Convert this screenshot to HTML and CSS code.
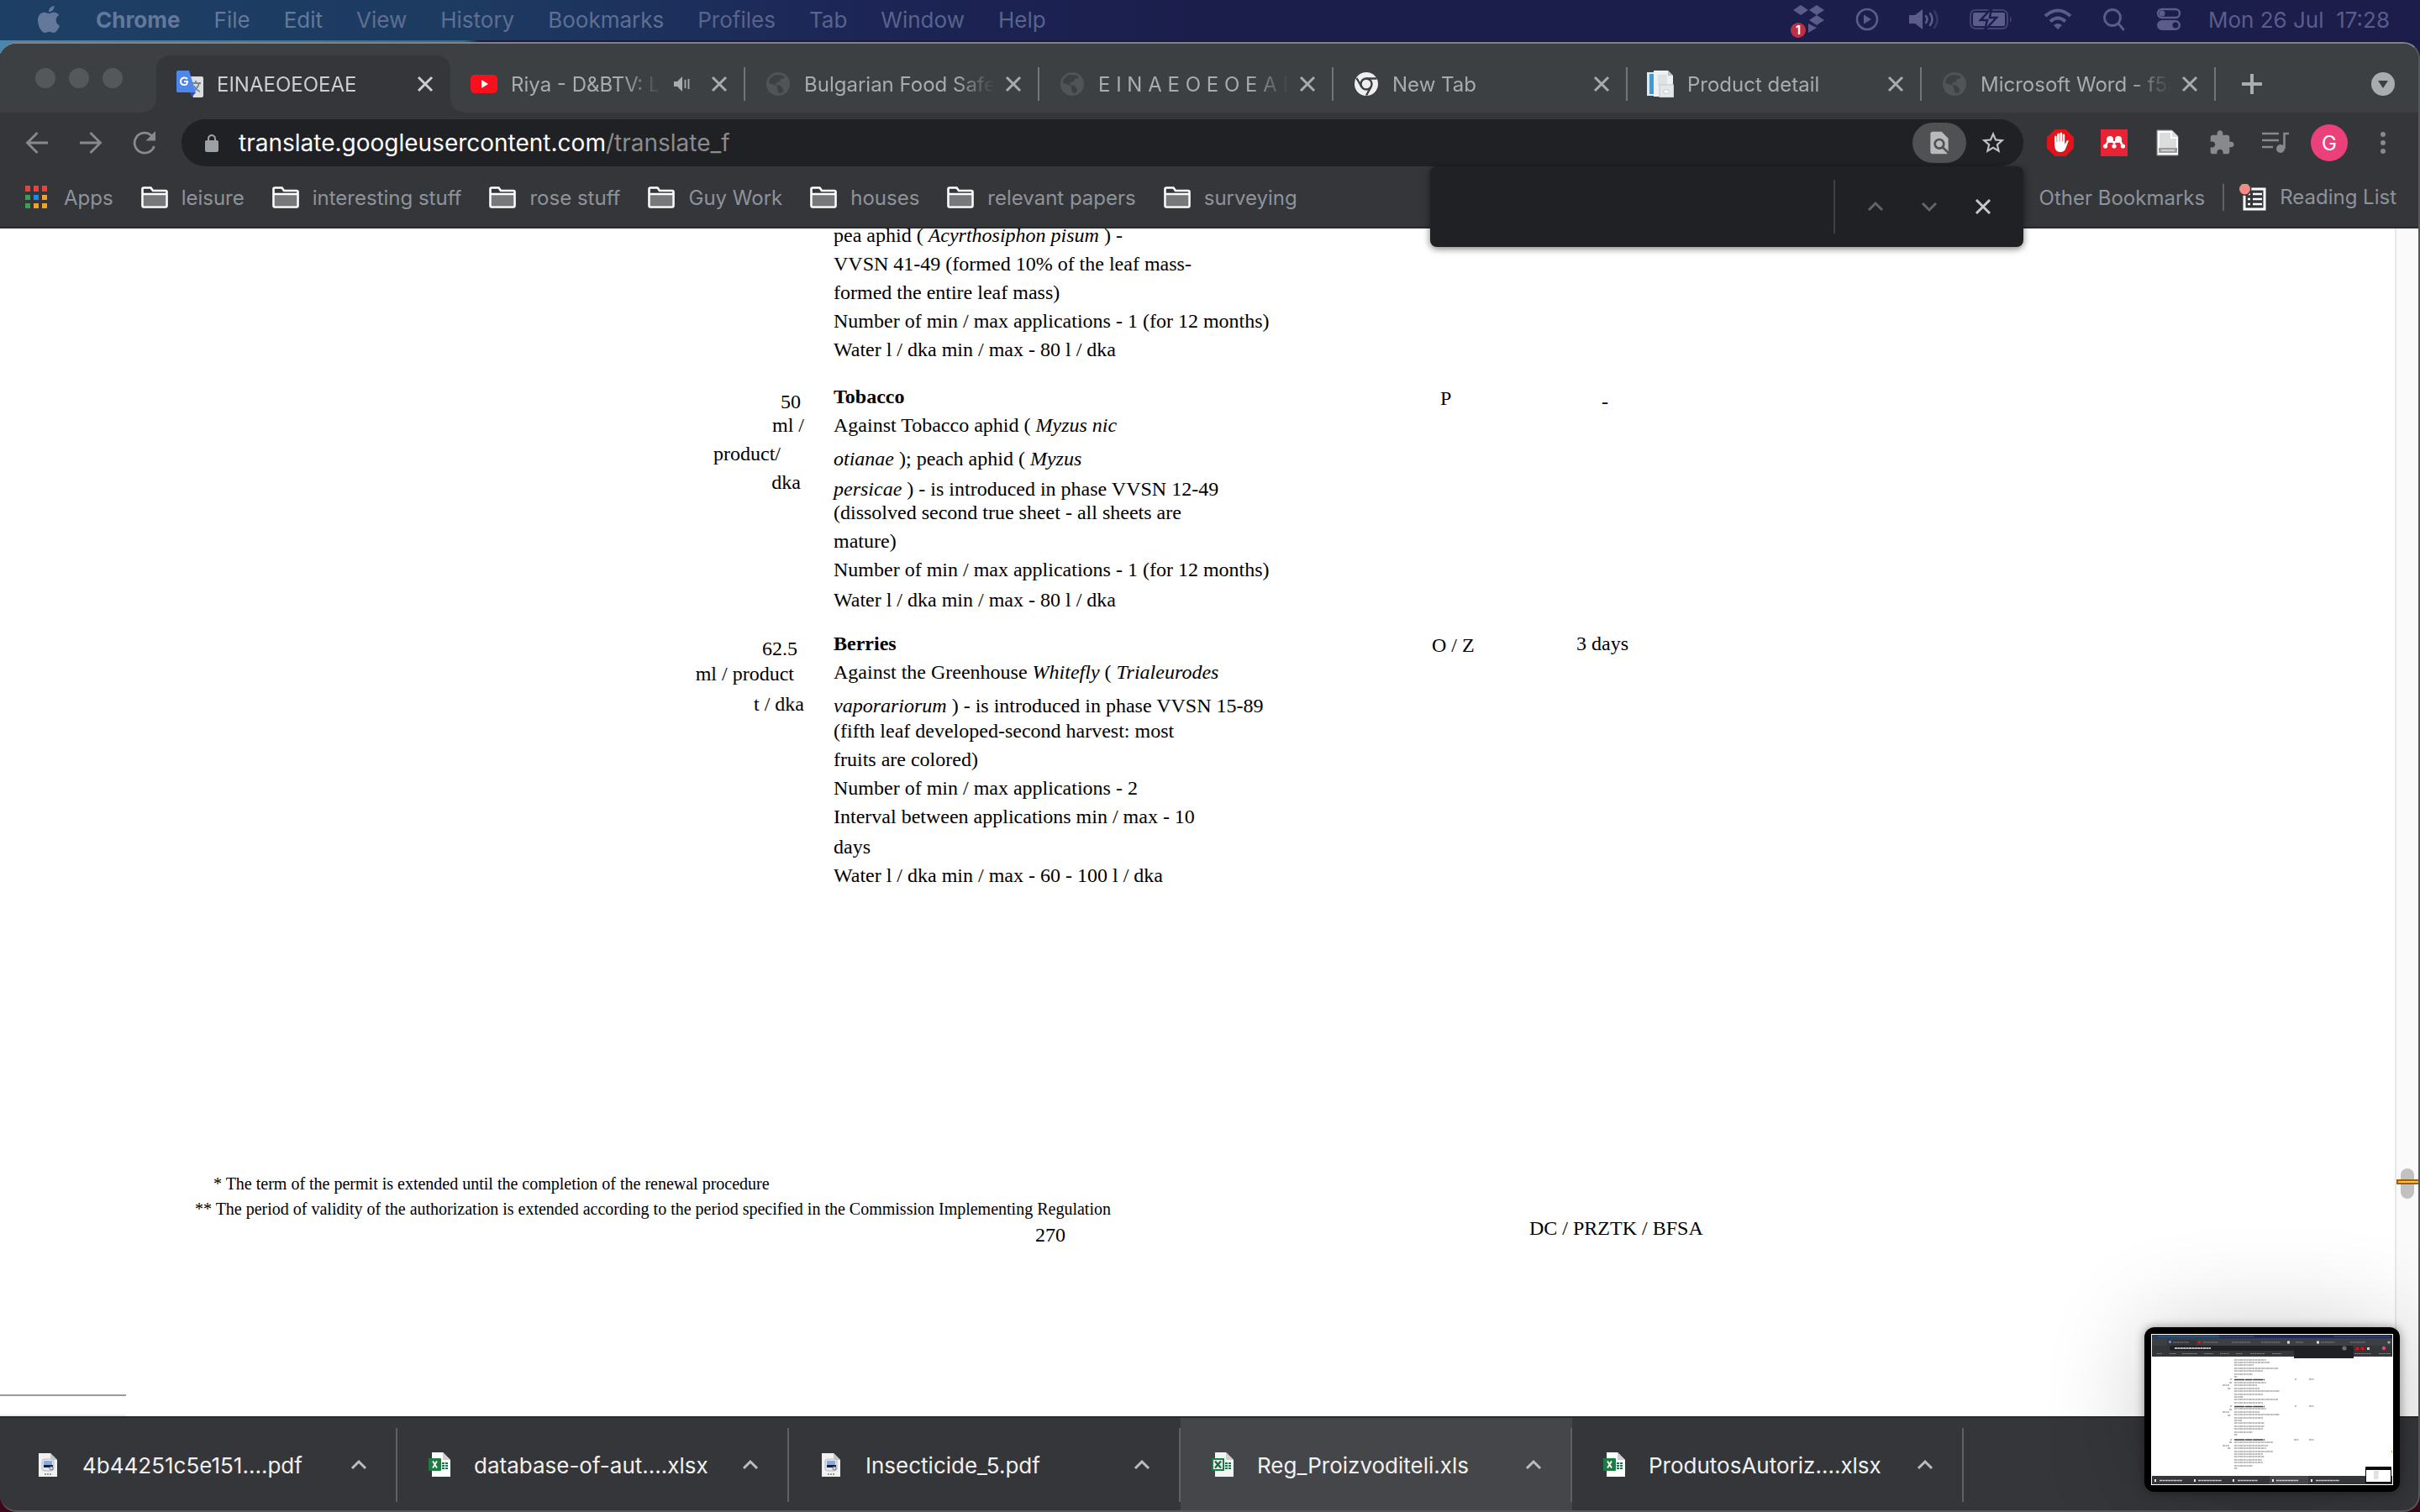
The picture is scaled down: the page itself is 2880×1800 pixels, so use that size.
FILE: index.html
```html
<!DOCTYPE html>
<html lang="en">
<head>
<meta charset="utf-8">
<title>EINAEOEOEAE</title>
<link rel="stylesheet" href="styles.css">
</head>
<body>
<svg class="sprite" aria-hidden="true">
  <symbol id="close" viewBox="0 0 20 20"><path d="M2 2l16 16M18 2L2 18" fill="none" stroke="currentColor" stroke-width="3"/></symbol>
  <symbol id="up" viewBox="0 0 20 20"><path d="M2 14l8-8 8 8" fill="none" stroke="currentColor" stroke-width="3"/></symbol>
  <symbol id="down" viewBox="0 0 20 20"><path d="M2 6l8 8 8-8" fill="none" stroke="currentColor" stroke-width="3"/></symbol>
  <symbol id="globe" viewBox="0 0 28 28"><circle cx="14" cy="14" r="14" fill="#505457"/><path d="M12 3c-5 1-9 5-9 10l7 2 3 2v3l2 5c2 0 4-1 5-2v-3l-3-4-6-1 1-3 4-1 1-3 5-1-2-3z" fill="#3c4043"/></symbol>
  <symbol id="folder" viewBox="0 0 32 26"><path d="M2 23V2h10l3 4h15v17z" fill="#35363a"/><path d="M3 10h26v13H3z" fill="#77787a"/><path d="M1.500 22.500V3q0-1.500 1.500-1.500h8.500L14 5h15q1.500 0 1.500 1.500v16q0 2-1.500 2H3q-1.500 0-1.500-2zM2 9h28" fill="none" stroke="#fff" stroke-width="2.600"/></symbol>
  <symbol id="pdf" viewBox="0 0 24 30"><path d="M1 1h14l8 8v20H1z" fill="#f1f1f1"/><path d="M15 1v8h8z" fill="#c4c4c4"/><rect x="5" y="8" width="14" height="14" rx="3" fill="#e3e6ea" stroke="#b5b9be"/><path d="M7 10h10v6H7z" fill="#86a9e6"/><path d="M7 15h11v3H7z" fill="#14213b"/><circle cx="16" cy="19" r="2" fill="#ddd" stroke="#777"/><path d="M8 26h8" stroke="#999" stroke-width="2" stroke-dasharray="2 1"/></symbol>
  <symbol id="excel" viewBox="0 0 28 30"><path d="M5 0h13l9 9v20H5z" fill="#fff"/><path d="M18 0l9 9h-9z" fill="#cfcfcf"/><path d="M17 12h3v2h-3zm4 0h3v2h-3zm-4 3h3v2h-3zm4 0h3v2h-3zm-4 3h3v2h-3zm4 0h3v2h-3z" fill="#21704a"/><rect x="1" y="7" width="15" height="15" rx="1" fill="#1d7c42"/><path d="M6 10.500l5 8M11 10.500l-5 8" stroke="#fff" stroke-width="1.800"/></symbol>
  <symbol id="excel-old" viewBox="0 0 28 30"><path d="M5 0h13l9 9v20H5z" fill="#f4f4f4"/><path d="M18 0l9 9h-9z" fill="#cfcfcf"/><path d="M17 12h3v2h-3zm4 0h3v2h-3zm-4 3h3v2h-3zm4 0h3v2h-3zm-4 3h3v2h-3zm4 0h3v2h-3z" fill="#21704a"/><rect x="2" y="8" width="13" height="13" fill="#e8f1ec" stroke="#1d7c42" stroke-width="2"/><path d="M5 10.500l7 8M12 10.500l-7 8" stroke="#1d6a3c" stroke-width="2.400"/></symbol>
</svg>

<header class="menubar">
  <nav class="menus" aria-label="Menu bar">
    <button class="menu apple" aria-label="Apple menu"><svg viewBox="0 0 24 24" fill="currentColor"><path d="M12.152 6.896c-.948 0-2.415-1.078-3.960-1.040-2.040.027-3.910 1.183-4.961 3.014-2.117 3.675-.546 9.103 1.519 12.090 1.013 1.454 2.208 3.090 3.792 3.039 1.520-.065 2.090-.987 3.935-.987 1.831 0 2.350.987 3.960.948 1.637-.026 2.676-1.480 3.676-2.948 1.156-1.688 1.636-3.325 1.662-3.415-.039-.013-3.182-1.221-3.220-4.857-.026-3.040 2.480-4.494 2.597-4.559-1.429-2.090-3.623-2.324-4.390-2.376-2-.156-3.675 1.090-4.610 1.090zM15.530 3.830c.843-1.012 1.400-2.427 1.245-3.830-1.207.052-2.662.805-3.532 1.818-.780.896-1.454 2.338-1.273 3.714 1.338.104 2.715-.688 3.559-1.701"/></svg></button>
    <button class="menu app">Chrome</button>
    <button class="menu">File</button>
    <button class="menu">Edit</button>
    <button class="menu">View</button>
    <button class="menu">History</button>
    <button class="menu">Bookmarks</button>
    <button class="menu">Profiles</button>
    <button class="menu">Tab</button>
    <button class="menu">Window</button>
    <button class="menu">Help</button>
  </nav>
  <div class="status">
    <span class="dropbox"><svg width="40" height="36" viewBox="0 0 40 36" fill="currentColor"><path d="M11 1l9 6-9 6-9-6zM30 1l9 6-9 6-9-6zM30 13l9 6-9 6-9-6zM20 23l10 5-10 6z"/></svg><b class="badge">1</b></span>
    <svg width="28" height="28" viewBox="0 0 28 28" fill="none" stroke="currentColor" stroke-width="2.600"><circle cx="14" cy="14" r="12"/><path d="M10 8.500v11l9-5.500z" fill="currentColor" stroke="none"/></svg>
    <svg width="36" height="26" viewBox="0 0 36 26" fill="none" stroke="currentColor" stroke-width="2.600" stroke-linecap="round"><path d="M0 8h7l9-7v24l-9-7H0z" fill="currentColor" stroke="none"/><path d="M20 9q3 4 0 8M25 6q5 7 0 14"/><path d="M30 3q7 10 0 20" opacity=".4"/></svg>
    <svg width="52" height="26" viewBox="0 0 52 26"><rect x="1" y="2" width="44" height="22" rx="6" fill="none" stroke="currentColor" stroke-width="2" opacity=".6"/><rect x="4" y="5" width="38" height="16" rx="2" fill="currentColor"/><path d="M26 0L13 14h8l-3 12 14-15h-8z" fill="currentColor" stroke="#1c1d4b" stroke-width="2.500"/><path d="M48 9q4 4 0 8z" fill="currentColor" opacity=".6"/></svg>
    <svg width="34" height="26" viewBox="0 0 34 26" fill="none" stroke="currentColor" stroke-width="4"><path d="M2 9q15-13 30 0M8 15.500q9-8 18 0"/><path d="M12 20q5-4 10 0l-5 5z" fill="currentColor" stroke="none"/></svg>
    <svg width="28" height="28" viewBox="0 0 28 28" fill="none" stroke="currentColor" stroke-width="2.800" stroke-linecap="round"><circle cx="12" cy="12" r="9.500"/><path d="M19 19l6 7"/></svg>
    <svg width="30" height="28" viewBox="0 0 30 28"><rect x="2" y="2" width="26" height="10" rx="5" fill="none" stroke="currentColor" stroke-width="2.400"/><circle cx="7" cy="7" r="3.500" fill="currentColor"/><rect x="1" y="15" width="28" height="12" rx="6" fill="currentColor"/><circle cx="23" cy="21" r="3.500" fill="#1c1d4b"/></svg>
    <time class="clock">Mon 26 Jul&nbsp; 17:28</time>
  </div>
</header>

<main class="window">
  <div class="tabstrip">
    <div class="lights"><button aria-label="Close window"></button><button aria-label="Minimise window"></button><button aria-label="Zoom window"></button></div>
    <div class="tabs">
      <div class="tab active">
        <svg class="favicon" viewBox="0 0 32 32"><path d="M11 7h19q2 0 2 2v21q0 2-2 2H20z" fill="#dedede"/><path d="M18 15h11M23 12v3M27 15q-2 7-8 10M21 18q2 5 7 7" stroke="#6f8794" stroke-width="1.800" fill="none"/><path d="M2 0h13l8 26H2q-2 0-2-2V2q0-2 2-2z" fill="#4f86ec"/><path d="M16 26h7l-5 6z" fill="#3949ab"/><path d="M13 10q-2-2-4.500-1.500Q5 9.500 5 13t4 4 4-4H9" fill="none" stroke="#fff" stroke-width="2"/></svg>
        <span class="title">EINAEOEOEAE</span>
        <button class="icon close" aria-label="Close tab"><svg><use href="#close"/></svg></button>
      </div>
      <div class="tab">
        <svg class="favicon" viewBox="0 0 32 32"><rect y="5" width="32" height="22" rx="5" fill="#f9101c"/><path d="M13 11v10l8-5z" fill="#fff"/></svg>
        <span class="title">Riya - D&amp;BTV: Live</span>
        <svg class="audio" viewBox="0 0 20 18"><path d="M0 6h4l6-6v18l-6-6H0z" fill="currentColor"/><path d="M13.500 4v10M17.500 3v12" stroke="currentColor" stroke-width="1.800"/></svg>
        <button class="icon close" aria-label="Close tab"><svg><use href="#close"/></svg></button>
      </div>
      <div class="tab">
        <svg class="favicon globe"><use href="#globe"/></svg>
        <span class="title">Bulgarian Food Safety</span>
        <button class="icon close" aria-label="Close tab"><svg><use href="#close"/></svg></button>
      </div>
      <div class="tab">
        <svg class="favicon globe"><use href="#globe"/></svg>
        <span class="title">E I N A E O E O E A E</span>
        <button class="icon close" aria-label="Close tab"><svg><use href="#close"/></svg></button>
      </div>
      <div class="tab">
        <svg class="favicon globe" viewBox="0 0 28 28"><circle cx="14" cy="14" r="14" fill="#eee"/><circle cx="14" cy="14" r="6.500" fill="#eee" stroke="#3c4043" stroke-width="2.400"/><path d="M14 7.500h12.500M8.500 17.500L2.500 7M19.600 17.500L14 27.500" stroke="#3c4043" stroke-width="2.400"/></svg>
        <span class="title">New Tab</span>
        <button class="icon close" aria-label="Close tab"><svg><use href="#close"/></svg></button>
      </div>
      <div class="tab">
        <svg class="favicon" viewBox="0 0 32 32"><path d="M0 2h20v28H0z" fill="#d7ecf8"/><path d="M3 4h5v24H3z" fill="#3f9ad6"/><path d="M8 0h17l6 6v25H8z" fill="#eef1f3"/><path d="M13 5h11v13H13z" fill="#dde2e6"/><path d="M25 0v6h6z" fill="#b9c0c5"/><path d="M15 17h17v15H15z" fill="#e4e6e8" stroke="#c2c7ca"/><path d="M20 23h6v4h-6z" fill="#fff" stroke="#ccc"/></svg>
        <span class="title">Product detail</span>
        <button class="icon close" aria-label="Close tab"><svg><use href="#close"/></svg></button>
      </div>
      <div class="tab">
        <svg class="favicon globe"><use href="#globe"/></svg>
        <span class="title">Microsoft Word - f5a</span>
        <button class="icon close" aria-label="Close tab"><svg><use href="#close"/></svg></button>
      </div>
      <button class="icon newtab" aria-label="New tab"><svg viewBox="0 0 24 24"><path d="M12 0v24M0 12h24" stroke="currentColor" stroke-width="4"/></svg></button>
    </div>
    <button class="icon tabsearch" aria-label="Search tabs"><svg viewBox="0 0 28 28"><circle cx="14" cy="14" r="14" fill="#a9acae"/><path d="M8 10h12l-6 9z" fill="#3c4043"/></svg></button>
  </div>

  <div class="toolbar">
    <div class="navs">
      <button class="icon" aria-label="Back"><svg viewBox="0 0 28 28" fill="none" stroke="currentColor" stroke-width="2.800"><path d="M27 14H3M14.500 2L2.500 14l12 12"/></svg></button>
      <button class="icon" aria-label="Forward"><svg viewBox="0 0 28 28" fill="none" stroke="currentColor" stroke-width="2.800"><path d="M1 14h24M13.500 2l12 12-12 12"/></svg></button>
      <button class="icon" aria-label="Reload"><svg viewBox="0 0 28 28"><path d="M22.500 5.500A12 12 0 1 0 25.500 18" fill="none" stroke="currentColor" stroke-width="2.800"/><path d="M27 0v11.500H15.500z" fill="currentColor"/></svg></button>
    </div>
    <div class="omnibox">
      <svg class="lock" viewBox="4 1 16 21" fill="currentColor"><path d="M18 8h-1V6c0-2.760-2.240-5-5-5S7 3.240 7 6v2H6c-1.100 0-2 .9-2 2v10c0 1.100.9 2 2 2h12c1.100 0 2-.9 2-2V10c0-1.100-.9-2-2-2zM9 6c0-1.660 1.340-3 3-3s3 1.340 3 3v2H9V6z"/></svg>
      <a class="url" href="#page">translate.googleusercontent.com<span>/translate_f</span></a>
      <button class="icon findpill" aria-label="Find in page"><svg viewBox="0 0 24 24" fill="currentColor"><path d="M20 19.590V8l-6-6H6c-1.100 0-1.990.9-1.990 2L4 20c0 1.100.890 2 1.990 2H18c.450 0 .850-.150 1.190-.400l-4.430-4.430c-.8.520-1.740.830-2.760.830-2.760 0-5-2.240-5-5s2.240-5 5-5 5 2.240 5 5c0 1.020-.310 1.960-.830 2.750L20 19.590zM9 13c0 1.660 1.340 3 3 3s3-1.340 3-3-1.340-3-3-3-3 1.340-3 3z"/></svg></button>
      <button class="icon star" aria-label="Bookmark this tab"><svg viewBox="0 0 24 24" fill="currentColor"><path d="M22 9.240l-7.190-.620L12 2 9.190 8.630 2 9.240l5.460 4.730L5.820 21 12 17.270 18.180 21l-1.630-7.030L22 9.240zM12 15.400l-3.760 2.270 1-4.280-3.320-2.880 4.380-.38L12 6.100l1.710 4.040 4.380.38-3.320 2.880 1 4.280L12 15.400z"/></svg></button>
    </div>
    <div class="extensions">
      <button class="icon" aria-label="Ad blocker"><svg viewBox="0 0 32 32"><path d="M9.500 0h13L32 9.500v13L22.500 32h-13L0 22.500v-13z" fill="#e1141c"/><path d="M9 18V9q0-1.500 1.300-1.500T11.600 9v6h.6V6q0-1.500 1.300-1.500T14.800 6v8.500h.6V5q0-1.500 1.400-1.500T18.200 5v9.500h.6V7q0-1.400 1.200-1.400T21.200 7v11l2.300-4.300q.8-1.200 2-.5.400.4 0 1.400l-3.500 9Q20.500 27 16 27q-7 0-7-9z" fill="#fff"/></svg></button>
      <button class="icon" aria-label="Mendeley"><svg viewBox="0 0 32 32"><path d="M0 0h32v32H0z" fill="#e72335"/><g fill="#fff"><circle cx="11" cy="12" r="4"/><circle cx="21" cy="12" r="4"/><circle cx="5.500" cy="20" r="2.600"/><circle cx="26.500" cy="20" r="2.600"/><circle cx="16" cy="20" r="2.600"/></g><path d="M6 19.500l3-6M26 19.500l-3-6M11 12l5 4 5-4" fill="none" stroke="#fff" stroke-width="2.600"/></svg></button>
      <button class="icon" aria-label="Document"><svg viewBox="0 0 32 32"><path d="M3 1h18l7 7v23H3z" fill="#dcdcdc" stroke="#888"/><path d="M5 3h15v7h7v19H5z" fill="none" stroke="#fff" stroke-width="2"/><path d="M5 22h22v6H5z" fill="#9b9b9b"/><path d="M8 25h16" stroke="#ccc" stroke-width="2"/></svg></button>
      <button class="icon" aria-label="Extensions"><svg viewBox="0 0 24 24" fill="currentColor"><path d="M20.500 11H19V7c0-1.100-.9-2-2-2h-4V3.500C13 2.120 11.880 1 10.500 1S8 2.120 8 3.500V5H4c-1.100 0-1.990.9-1.990 2v3.800H3.500c1.490 0 2.700 1.210 2.700 2.700s-1.210 2.700-2.700 2.700H2V20c0 1.100.9 2 2 2h3.800v-1.500c0-1.490 1.210-2.700 2.700-2.700 1.490 0 2.700 1.210 2.700 2.700V22H17c1.100 0 2-.9 2-2v-4h1.500c1.380 0 2.500-1.120 2.500-2.500S21.880 11 20.500 11z"/></svg></button>
      <button class="icon" aria-label="Media controls"><svg viewBox="0 0 32 32" fill="none" stroke="currentColor" stroke-width="2.600"><path d="M0 5h20M0 13h20M0 21h13M26.500 23V5H32"/><circle cx="22" cy="23" r="5" fill="currentColor" stroke="none"/></svg></button>
      <button class="icon avatar" aria-label="Profile">G</button>
      <button class="icon" aria-label="More"><svg viewBox="0 0 32 32" fill="currentColor"><circle cx="16" cy="6" r="3"/><circle cx="16" cy="16" r="3"/><circle cx="16" cy="26" r="3"/></svg></button>
    </div>
  </div>

  <nav class="bookmarks" aria-label="Bookmarks">
    <a class="bookmark apps" href="#apps"><svg viewBox="0 0 26 28"><g fill="#ee3f38"><path d="M0 0h6v7H0zM10 0h6v7h-6zM20 0h6v7h-6z"/></g><g fill="#3c9f58"><path d="M0 11h6v6H0zM0 21h6v6H0z"/></g><path d="M10 11h6v6h-6z" fill="#1e88f0"/><g fill="#f2a327"><path d="M20 11h6v6h-6zM10 21h6v6h-6zM20 21h6v6h-6z"/></g></svg>Apps</a>
    <a class="bookmark" href="#leisure"><svg><use href="#folder"/></svg>leisure</a>
    <a class="bookmark" href="#interesting"><svg><use href="#folder"/></svg>interesting stuff</a>
    <a class="bookmark" href="#rose"><svg><use href="#folder"/></svg>rose stuff</a>
    <a class="bookmark" href="#guy"><svg><use href="#folder"/></svg>Guy Work</a>
    <a class="bookmark" href="#houses"><svg><use href="#folder"/></svg>houses</a>
    <a class="bookmark" href="#papers"><svg><use href="#folder"/></svg>relevant papers</a>
    <a class="bookmark" href="#surveying"><svg><use href="#folder"/></svg>surveying</a>
    <a class="bookmark other" href="#other">Other Bookmarks</a>
    <a class="bookmark reading" href="#reading"><svg viewBox="0 0 32 32"><path d="M6 6h24v24H6z" fill="none" stroke="#fff" stroke-width="3"/><path d="M10 12h3M10 18h3M10 24h3M16 12h11M16 18h11M16 24h11" stroke="#fff" stroke-width="2.400"/><circle cx="6.500" cy="6" r="8" fill="#35363a"/><circle cx="6.500" cy="6" r="6.500" fill="#f28b82"/></svg>Reading List</a>
  </nav>

  <div class="findbar" role="search">
    <input class="findtext" type="text" aria-label="Find in page">
    <button class="icon dim" aria-label="Previous"><svg><use href="#up"/></svg></button>
    <button class="icon dim" aria-label="Next"><svg><use href="#down"/></svg></button>
    <button class="icon" aria-label="Close find bar"><svg><use href="#close"/></svg></button>
  </div>

  <section class="page" id="page">
    <div class="document">
      <table class="uses">
        <tbody>
          <tr>
            <td class="dose"></td>
            <td class="crop">
              <p>pea aphid ( <i>Acyrthosiphon pisum</i> ) -</p>
              <p class="n">VVSN 41-49 (formed 10% of the leaf mass-</p>
              <p class="n">formed the entire leaf mass)</p>
              <p class="n">Number of min / max applications - 1 (for 12 months)</p>
              <p class="n">Water l / dka min / max - 80 l / dka</p>
            </td>
            <td class="category"></td>
            <td class="quarantine"></td>
          </tr>
          <tr>
            <td class="dose low"><p class="in4">50</p><p>ml /</p><p class="n in28">product/</p><p class="n in4">dka</p></td>
            <td class="crop">
              <p><b>Tobacco</b></p>
              <p class="n">Against Tobacco aphid ( <i>Myzus nic</i></p>
              <p class="w">otianae<span class="roman"> ); peach aphid ( </span>Myzus</p>
              <p class="m">persicae<span class="roman"> ) - is introduced in phase VVSN 12-49</span></p>
              <p>(dissolved second true sheet - all sheets are</p>
              <p class="n">mature)</p>
              <p class="n">Number of min / max applications - 1 (for 12 months)</p>
              <p class="m">Water l / dka min / max - 80 l / dka</p>
            </td>
            <td class="category mid"><p class="letter">P</p></td>
            <td class="quarantine low"><p class="dash">-</p></td>
          </tr>
          <tr>
            <td class="dose low"><p class="in8">62.5</p><p class="in12 t">ml / product</p><p class="m">t / dka</p></td>
            <td class="crop">
              <p><b>Berries</b></p>
              <p class="n">Against the Greenhouse <i>Whitefly</i> ( <i>Trialeurodes</i></p>
              <p class="w">vaporariorum<span class="roman"> ) - is introduced in phase VVSN 15-89</span></p>
              <p class="t">(fifth leaf developed-second harvest: most</p>
              <p class="n">fruits are colored)</p>
              <p class="n">Number of min / max applications - 2</p>
              <p class="n">Interval between applications min / max - 10</p>
              <p class="m">days</p>
              <p class="n">Water l / dka min / max - 60 - 100 l / dka</p>
            </td>
            <td class="category mid"><p>O / Z</p></td>
            <td class="quarantine"><p>3 days</p></td>
          </tr>
        </tbody>
      </table>
      <footer class="pagefoot">
        <div class="notes">
          <p class="note first">* The term of the permit is extended until the completion of the renewal procedure</p>
          <p class="note">** The period of validity of the authorization is extended according to the period specified in the Commission Implementing Regulation</p>
          <p class="number">270</p>
        </div>
        <p class="agency">DC / PRZTK / BFSA</p>
      </footer>
      <div class="linkstatus"></div>
    </div>
    <div class="scrollbar"><div class="thumb"></div><div class="match"></div></div>
  </section>

  <footer class="downloads">
    <button class="download"><svg class="file"><use href="#pdf"/></svg><span class="name">4b44251c5e151....pdf</span><svg class="chev"><use href="#up"/></svg></button>
    <button class="download"><svg class="file"><use href="#excel"/></svg><span class="name">database-of-aut....xlsx</span><svg class="chev"><use href="#up"/></svg></button>
    <button class="download"><svg class="file"><use href="#pdf"/></svg><span class="name">Insecticide_5.pdf</span><svg class="chev"><use href="#up"/></svg></button>
    <button class="download hover"><svg class="file"><use href="#excel-old"/></svg><span class="name">Reg_Proizvoditeli.xls</span><svg class="chev"><use href="#up"/></svg></button>
    <button class="download"><svg class="file"><use href="#excel"/></svg><span class="name">ProdutosAutoriz....xlsx</span><svg class="chev"><use href="#up"/></svg></button>
  </footer>
</main>

<aside class="preview" aria-label="Screen capture preview">
  <svg viewBox="0 0 288 180">
    <path d="M0 0h288v180H0z" fill="#fff"/>
    <path d="M1 1h286v4H1z" fill="#1d2658"/><path d="M1 1h80v4H1z" fill="#1e3f66"/>
    <path d="M1 5h286v9H1z" fill="#3c4043"/><path d="M1 14h286v13H1z" fill="#35363a"/><path d="M19 7h35v7H19z" fill="#35363a"/>
    <rect x="22" y="14" width="219" height="6" rx="3" fill="#202124"/><path d="M170 19h71v10h-71z" fill="#202124"/>
    <g stroke="#9aa0a6" stroke-width="1.200" stroke-dasharray="2 .5" opacity=".7"><path d="M8 3h115M218 3h66" opacity=".6"/><path d="M26 10h19M62 10h18M96 10h22M131 10h23M172 10h9M202 10h16M237 10h18"/><path d="M7 23.500h6M22 23.500h8M37 23.500h18M63 23.500h11M82 23.500h11M101 23.500h8M118 23.500h17M144 23.500h11M242 23.500h20M271 23.500h14"/></g>
    <path d="M28 17h43" stroke="#eee" stroke-width="1.400" stroke-dasharray="3 .4"/>
    <path d="M21 8h3v3h-3z" fill="#4f86ec"/><path d="M56 9h3v2h-3z" fill="#f9101c"/><path d="M162 8.500h3v3h-3zM197 8.500h3v3h-3z" fill="#ddd"/><path d="M244 16h3v3h-3zM250 16h3v3h-3z" fill="#e1141c"/><path d="M257 16h3v3h-3z" fill="#ccc"/><circle cx="277" cy="17" r="2.200" fill="#e94481"/><circle cx="230" cy="17" r="2.600" fill="#6b6c6e"/><circle cx="283" cy="10" r="1.600" fill="#aaa"/>
    <g stroke="#333" stroke-width="1.100" stroke-dasharray="3 .6 2 .5 4 .6" opacity=".65">
      <path d="M99 31h38M99 34h42M99 37h23M99 41h52M99 44h34M99 48h22M99 51h4"/>
      <path d="M99 58h38M99 61h27M99 65h30M99 68h54M99 72h34M99 75h11M99 78h52M99 82h34"/>
      <path d="M99 89h38M99 93h30M99 96h54M99 100h34M99 103h9M99 106h36M99 110h36M99 113h34M99 117h22M99 120h4"/>
      <path d="M99 129h46M99 133h40M99 136h38M99 140h46M99 143h34M99 146h36M99 150h33M99 153h34M99 157h22M99 160h4"/>
      <path d="M94 54h2M93 58h3M85 61h8M91 65h4M94 86h2M93 90h3M85 93h8M91 97h4M94 126h2M93 129h3M85 133h8M91 136h4"/>
      <path d="M171 54h2M188 54h6M171 86h2M188 86h6M170 126h6M188 126h6"/>
    </g>
    <g stroke="#000" stroke-width="1.500" stroke-dasharray="12 .6 9 .6" opacity=".75"><path d="M99 54.500h36M99 86.500h36M99 126h36"/></g>
    <path d="M286 140h2" stroke="#b5651d" stroke-width="1.400"/>
    <path d="M1 169h286v10H1z" fill="#35363a"/><path d="M141 169h46v10h-46z" fill="#454649"/>
    <g stroke="#eee" stroke-width="1.400" stroke-dasharray="3 .4" opacity=".8"><path d="M10 174.500h27M56 174.500h28M103 174.500h24M149 174.500h26M196 174.500h28"/></g>
    <g fill="#eee"><path d="M4 173h2v3H4zM51 173h2v3h-2zM97 173h2v3h-2zM144 173h2v3h-2zM190 173h2v3h-2z"/></g>
    <rect x="255" y="158" width="31" height="20" rx="1" fill="#0b0b0d"/><path d="M256 162h29v14h-29z" fill="#fff"/><path d="M265 164h6M265 166h6M265 168h5M265 170h6M265 172h5" stroke="#aaa" stroke-width=".7"/>
    <path d="M.5.500h287v179H.5z" fill="none" stroke="#fff"/>
  </svg>
</aside>
</body>
</html>
```
FILE: styles.css
```css
* { box-sizing: border-box; }

body {
  margin: 0;
  height: 100vh;
  display: flex;
  flex-direction: column;
  overflow: hidden;
  background: linear-gradient(90deg, #4a86ae 0, #2e6c92 32%, transparent 33%) 0 0 / 60% 64px no-repeat, linear-gradient(#0c0c2c 0, #1c1d4b 60px, #3a0818 90%);
  font-family: Inter, "Liberation Sans", sans-serif;
  font-size: 24px;
}

button, input {
  margin: 0;
  padding: 0;
  border: 0;
  background: none;
  color: inherit;
  font: inherit;
}

p { margin: 0; }
a { color: inherit; text-decoration: none; }
svg { display: block; flex: none; }
.sprite { position: absolute; width: 0; height: 0; }

.icon {
  display: flex;
  align-items: center;
  justify-content: center;
  flex: none;
}

/* System menu bar */
.menubar {
  display: flex;
  align-items: center;
  justify-content: space-between;
  height: 48px;
  margin-bottom: 2px;
  padding: 0 36px 2px 42px;
  background: linear-gradient(90deg, #1e3f65 0, #1d3a61 20%, #1c2556 36%, #1b1e4b 50%, #1c1d4b 100%);
  font-size: 26px;
}
.menus { display: flex; align-items: center; gap: 40px; color: #63789a; }
.menu:nth-child(n + 5) { color: #5e6f92; }
.menu:nth-child(n + 8) { color: #5a6389; }
.menu.app { font-weight: 700; }
.apple svg { width: 32px; height: 32px; }
.status { display: flex; align-items: center; gap: 36px; color: #5b5c8b; }
.dropbox { position: relative; }
.badge {
  position: absolute;
  left: -1px;
  bottom: -4px;
  width: 18px;
  height: 18px;
  border-radius: 9px;
  background: #bf2f48;
  color: #fff;
  font-size: 14px;
  line-height: 18px;
  text-align: center;
}
.clock { margin-left: -4px; }

/* Browser window */
.window {
  position: relative;
  flex: 1;
  min-height: 0;
  display: flex;
  flex-direction: column;
  overflow: hidden;
  border: 2px solid #66696c;
  border-width: 2px 2px 2px 0;
  border-color: #808385 #55575a #55575a;
  border-radius: 20px;
  background: #35363a;
}

.tabstrip {
  display: flex;
  align-items: flex-end;
  height: 82px;
  padding-right: 28px;
  background: #3c4043;
}
.lights { display: flex; gap: 16px; width: 186px; padding: 0 0 29px 42px; }
.lights button { width: 24px; height: 24px; border-radius: 12px; background: #55585b; }
.tabs { display: flex; flex: 1; min-width: 0; height: 68px; }
.tab {
  position: relative;
  display: flex;
  align-items: center;
  flex: 0 1 350px;
  min-width: 0;
  padding: 0 20px 0 24px;
  color: #a9acae;
}
.tab:not(.active)::after {
  content: "";
  position: absolute;
  right: -1px;
  width: 2px;
  height: 40px;
  background: #727578;
}
.active { border-radius: 16px 16px 0 0; background: #35363a; color: #cdcecf; }
.active::before, .active::after {
  content: "";
  position: absolute;
  bottom: 0;
  width: 16px;
  height: 16px;
}
.active::before { left: -16px; background: radial-gradient(circle at 0 0, #3c4043 15px, #35363a 16px); }
.active::after { right: -16px; background: radial-gradient(circle at 100% 0, #3c4043 15px, #35363a 16px); }
.favicon { width: 32px; height: 32px; margin-right: 16px; }
.globe { width: 28px; height: 28px; margin: 0 17px 0 2px; }
.tab .title {
  flex: 1;
  min-width: 0;
  overflow: hidden;
  white-space: nowrap;
  -webkit-mask-image: linear-gradient(90deg, #000 calc(100% - 48px), transparent);
  mask-image: linear-gradient(90deg, #000 calc(100% - 48px), transparent);
}
.audio { width: 20px; height: 18px; margin: 0 12px 0 14px; }
.close { width: 20px; margin-left: 12px; }
.close svg { width: 20px; height: 20px; }
.newtab { width: 24px; margin-left: 32px; color: #a9acae; }
.newtab svg { width: 24px; height: 24px; }
.tabsearch { height: 68px; }
.tabsearch svg { width: 28px; height: 28px; }

.toolbar { display: flex; align-items: center; height: 72px; padding: 0 26px 0 30px; color: #88898b; }
.navs { display: flex; gap: 36px; width: 186px; }
.navs svg { width: 28px; height: 28px; }
.omnibox {
  display: flex;
  align-items: center;
  flex: 1;
  height: 56px;
  padding: 0 20px 0 28px;
  border-radius: 28px;
  background: #202124;
}
.lock { width: 16px; height: 21px; color: #9aa0a6; }
.url { flex: 1; margin-left: 24px; color: #fff; font-size: 28px; }
.url span { color: #8b8c8e; }
.findpill { width: 64px; height: 48px; border-radius: 24px; background: #505153; color: #b9babb; }
.findpill svg { width: 32px; height: 32px; }
.star { margin-left: 16px; color: #c0c1c2; }
.star svg { width: 32px; height: 32px; }
.extensions { display: flex; align-items: center; gap: 32px; margin-left: 28px; }
.extensions svg { width: 32px; height: 32px; }
.avatar { width: 44px; height: 44px; margin: 0 -6px; border-radius: 22px; background: #ec407a; color: #fff; }

.bookmarks {
  display: flex;
  align-items: center;
  gap: 33px;
  height: 64px;
  padding: 0 26px 6px 30px;
  color: #8d939a;
}
.bookmark { display: flex; align-items: center; white-space: nowrap; }
.bookmark svg { width: 32px; height: 26px; margin-right: 16px; }
.apps svg { width: 26px; height: 28px; margin-right: 20px; }
.other { margin-left: auto; }
.reading { margin-left: -12px; padding-left: 18px; border-left: 2px solid #5f6368; line-height: 32px; }
.reading svg { height: 32px; }

.findbar {
  position: absolute;
  z-index: 2;
  top: 146px;
  right: 470px;
  display: flex;
  align-items: center;
  gap: 44px;
  width: 706px;
  height: 96px;
  padding-right: 38px;
  border-radius: 8px;
  background: #202124;
  box-shadow: 0 2px 8px #0008;
  color: #c7c8c9;
}
.findtext { flex: 1; min-width: 0; height: 64px; margin-right: -6px; padding-left: 24px; border-right: 2px solid #3f4043; color: #fff; outline: 0; }
.findbar svg { width: 20px; height: 20px; }
.dim { color: #636467; }

/* Translated document */
.page { position: relative; flex: 1; min-height: 0; display: flex; overflow: hidden; border-top: 2px solid #29292b; background: #fff; }
.document {
  position: relative;
  flex: 1;
  min-width: 0;
  color: #000;
  font-family: "Liberation Serif", "Times New Roman", serif;
  font-size: 24px;
  line-height: 28px;
}
.uses { margin-top: -6px; border-collapse: collapse; }
.uses td { padding: 0 0 24px; vertical-align: top; white-space: nowrap; }
.uses tr:first-child td { padding-bottom: 28px; }
.uses .low { padding-top: 6px; }
.uses .mid { padding-top: 2px; }
.dose { width: 957px; text-align: right; }
.uses .crop { width: 747px; padding-left: 35px; }
.category { width: 172px; }
.n { margin-top: 6px; }
.t { margin-top: 2px; }
.m { margin-top: 8px; }
.w { margin-top: 12px; font-style: italic; }
.w + .m { font-style: italic; }
.roman { font-style: normal; }
.in4 { margin-right: 4px; }
.in8 { margin-right: 8px; }
.in12 { margin-right: 12px; }
.in28 { margin-right: 28px; }
.letter { margin-left: 10px; }
.dash { margin-left: 30px; }
.pagefoot { display: flex; align-items: flex-end; margin-top: 314px; padding-left: 232px; }
.notes { width: 1588px; }
.note { font-size: 20px; line-height: 30px; }
.first { margin-left: 22px; }
.number { margin: 2px 0 0 1000px; }
.agency { padding-bottom: 8px; }
.linkstatus {
  position: absolute;
  bottom: 0;
  left: 0;
  width: 150px;
  height: 26px;
  border-top: 2px solid #9b9b9b;
  border-bottom: 2px solid #ececec;
  background: #fff;
}
.scrollbar { position: relative; width: 28px; border-left: 2px solid #e8e8e8; background: #fafafa; }
.thumb { position: absolute; top: 1119px; left: 5px; width: 16px; height: 36px; border-radius: 8px; background: #c1c1c1; }
.match { position: absolute; top: 1132px; left: 0; right: -2px; height: 6px; border: 2px solid #a8590c; background: #f0c93a; }

/* Download shelf */
.downloads { display: flex; height: 112px; padding-left: 7px; border-top: 2px solid #29292b; color: #f1f1f1; font-size: 26px; }
.download {
  position: relative;
  display: flex;
  align-items: center;
  flex: 0 1 466px;
  min-width: 0;
  padding: 2px 36px 0;
  text-align: left;
}
.download::after { content: ""; position: absolute; right: 0; top: 12px; bottom: 10px; width: 2px; background: #5f6063; }
.hover { background: #454649; }
.file { width: 28px; height: 30px; margin-right: 27px; }
.name { flex: 1; white-space: nowrap; }
.chev { width: 20px; height: 20px; color: #bcbdbe; }

/* Floating capture thumbnail */
.preview {
  position: absolute;
  right: 24px;
  bottom: 24px;
  width: 304px;
  padding: 8px;
  border-radius: 12px;
  background: #000;
  box-shadow: 0 0 12px #0006, 0 0 120px #0003;
}
```
